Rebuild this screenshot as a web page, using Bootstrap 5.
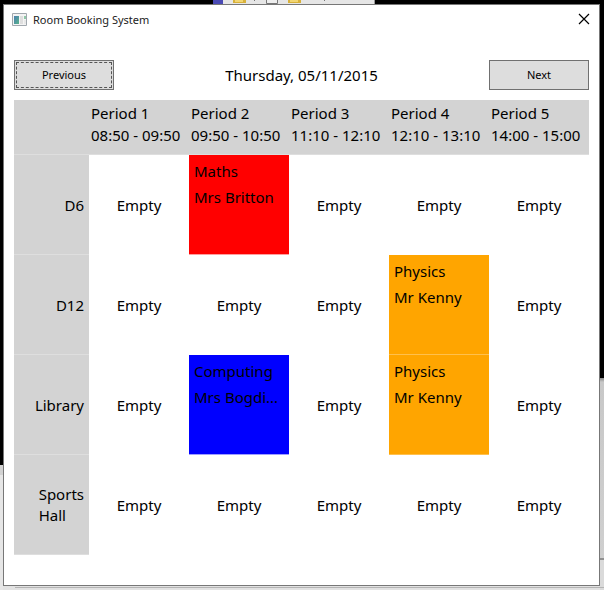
<!DOCTYPE html>
<html lang="en">
<head>
<meta charset="utf-8">
<meta name="viewport" content="width=device-width, initial-scale=1">
<title>Room Booking System</title>
<link href="https://cdn.jsdelivr.net/npm/bootstrap@5.3.0/dist/css/bootstrap.min.css" rel="stylesheet">
<style>
  body {
    font-family: "Segoe UI", "Noto Sans", "Open Sans", sans-serif;
    font-size: 15px;
    line-height: 21px;
    color: #000;
    padding: 4px 4px 4px 3px;
    min-height: 100vh;
    background:
      linear-gradient(#b4b4b4, #b4b4b4) 15px 587px / 100% 1px no-repeat,
      linear-gradient(#000 465px, #d2d2d2 465px, #d2d2d2 475px, #e6e6e6 475px) 0 0 / 3px 100% no-repeat,
      linear-gradient(#000 378px, #888 378px, #c8c8c8 382px, #cfcfcf 558px, #909090 558px, #909090 560px, #dadada 560px) 100% 0 / 4px 100% no-repeat,
      linear-gradient(#000 4px, #e2e2e2 4px);
  }
  .backdrop-strip { left: 213px; top: 0; }
  .app-window {
    background: #fff;
    border: 1px solid #777;
    min-height: calc(100vh - 8px);
  }
  .title-bar { height: 30px; font-size: 11px; padding: 0 8px 2px; }
  .title-text { margin-left: 6px; color: #222; }
  .close-btn { width: 14px; height: 14px; }
  .content-area { padding: 25px 10px 20px; }
  .nav-btn {
    width: 100px;
    height: 30px;
    font-size: 11px;
    line-height: 16px;
    color: #000;
    background: #ddd;
    border: 1px solid #707070;
  }
  .nav-btn.current { outline: 1px dashed #555; outline-offset: -3px; }
  .schedule { table-layout: fixed; margin-top: 10px; }
  .schedule th { font-weight: 400; background: #d3d3d3; }
  .schedule tr { border-bottom: 1px solid #fff; }
  .schedule th { border-bottom: 1px solid #dedede; }
  .schedule thead th { height: 54px; padding: 2px 0 0 2px; line-height: 22px; vertical-align: top; white-space: nowrap; }
  .schedule tbody th { height: 100px; padding: 2px 5px 0; }
  .schedule td { padding: 2px 0 0; text-align: center; }
  .schedule .booked { padding: 3px 5px; text-align: left; vertical-align: top; line-height: 26px; }
  .room-col { width: 75px; }
  .room-name { width: fit-content; }
  .subject-maths { background: #f00; border-bottom: 1px solid #ff9e9e; }
  .subject-computing { background: #00f; border-bottom: 1px solid #9e9eff; }
  .subject-physics { background: #ffa500; border-bottom: 1px solid #ffc04d; }
</style>
</head>
<body>
<svg class="backdrop-strip position-absolute" width="162" height="4" aria-hidden="true">
  <rect width="162" height="4" fill="#e6e6e6"/>
  <rect width="10" height="4" fill="#4a4ab5"/>
  <path d="M20 0h13v3H20zM75 0h13v3H75z" fill="#d8b13a"/>
  <path d="M22 0h8v2h-8zM77 0h8v2h-8z" fill="#f2d673"/>
  <path d="M53.500 0v3.500h11V0" fill="#eee" stroke="#777"/>
  <path d="M41 0h1v1h-1zM111 0h1v1h-1z" fill="#777"/>
  <path d="M161 0h1v4h-1z" fill="#999"/>
</svg>

<main class="app-window">
  <header class="title-bar d-flex align-items-center">
    <svg width="15" height="13" viewBox="0 0 15 13" aria-hidden="true">
      <defs><linearGradient id="pane" x2="1" y2="1"><stop stop-color="#4c7faf"/><stop offset="1" stop-color="#58b38c"/></linearGradient></defs>
      <path d="M.5.5h14v12H.5z" fill="#f4f4f4" stroke="#a0a7ad"/>
      <path d="M2 3h5v8H2z" fill="url(#pane)"/>
      <path d="M8 3h3v8H8z" fill="#dedede"/>
      <path d="M12 3h2v3h-2z" fill="#8fc7a7"/>
      <path d="M12 7h2v4h-2z" fill="#e8e8e8"/>
    </svg>
    <span class="title-text">Room Booking System</span>
    <button type="button" class="close-btn btn p-0 border-0 rounded-0 ms-auto d-flex align-items-center justify-content-center" aria-label="Close">
      <svg width="12" height="12" viewBox="0 0 12 12" aria-hidden="true"><path d="M1 1l10 10M11 1L1 11" stroke="#000" stroke-width="1.200"/></svg>
    </button>
  </header>

  <div class="content-area">
    <div class="d-flex justify-content-between align-items-center">
      <button type="button" class="nav-btn current btn rounded-0 p-0">Previous</button>
      <span>Thursday, 05/11/2015</span>
      <button type="button" class="nav-btn btn rounded-0 p-0">Next</button>
    </div>

    <table class="schedule w-100">
      <colgroup><col class="room-col"><col><col><col><col><col></colgroup>
      <thead>
        <tr>
          <th></th>
          <th scope="col">Period 1<br>08:50 - 09:50</th>
          <th scope="col">Period 2<br>09:50 - 10:50</th>
          <th scope="col">Period 3<br>11:10 - 12:10</th>
          <th scope="col">Period 4<br>12:10 - 13:10</th>
          <th scope="col">Period 5<br>14:00 - 15:00</th>
        </tr>
      </thead>
      <tbody>
        <tr>
          <th scope="row"><div class="room-name ms-auto">D6</div></th>
          <td>Empty</td>
          <td class="booked subject-maths">Maths<br>Mrs Britton</td>
          <td>Empty</td>
          <td>Empty</td>
          <td>Empty</td>
        </tr>
        <tr>
          <th scope="row"><div class="room-name ms-auto">D12</div></th>
          <td>Empty</td>
          <td>Empty</td>
          <td>Empty</td>
          <td class="booked subject-physics">Physics<br>Mr Kenny</td>
          <td>Empty</td>
        </tr>
        <tr>
          <th scope="row"><div class="room-name ms-auto">Library</div></th>
          <td>Empty</td>
          <td class="booked subject-computing">Computing<br>Mrs Bogdi...</td>
          <td>Empty</td>
          <td class="booked subject-physics">Physics<br>Mr Kenny</td>
          <td>Empty</td>
        </tr>
        <tr>
          <th scope="row"><div class="room-name ms-auto">Sports<br>Hall</div></th>
          <td>Empty</td>
          <td>Empty</td>
          <td>Empty</td>
          <td>Empty</td>
          <td>Empty</td>
        </tr>
      </tbody>
    </table>
  </div>
</main>
<script src="https://cdn.jsdelivr.net/npm/bootstrap@5.3.0/dist/js/bootstrap.bundle.min.js"></script>
</body>
</html>
